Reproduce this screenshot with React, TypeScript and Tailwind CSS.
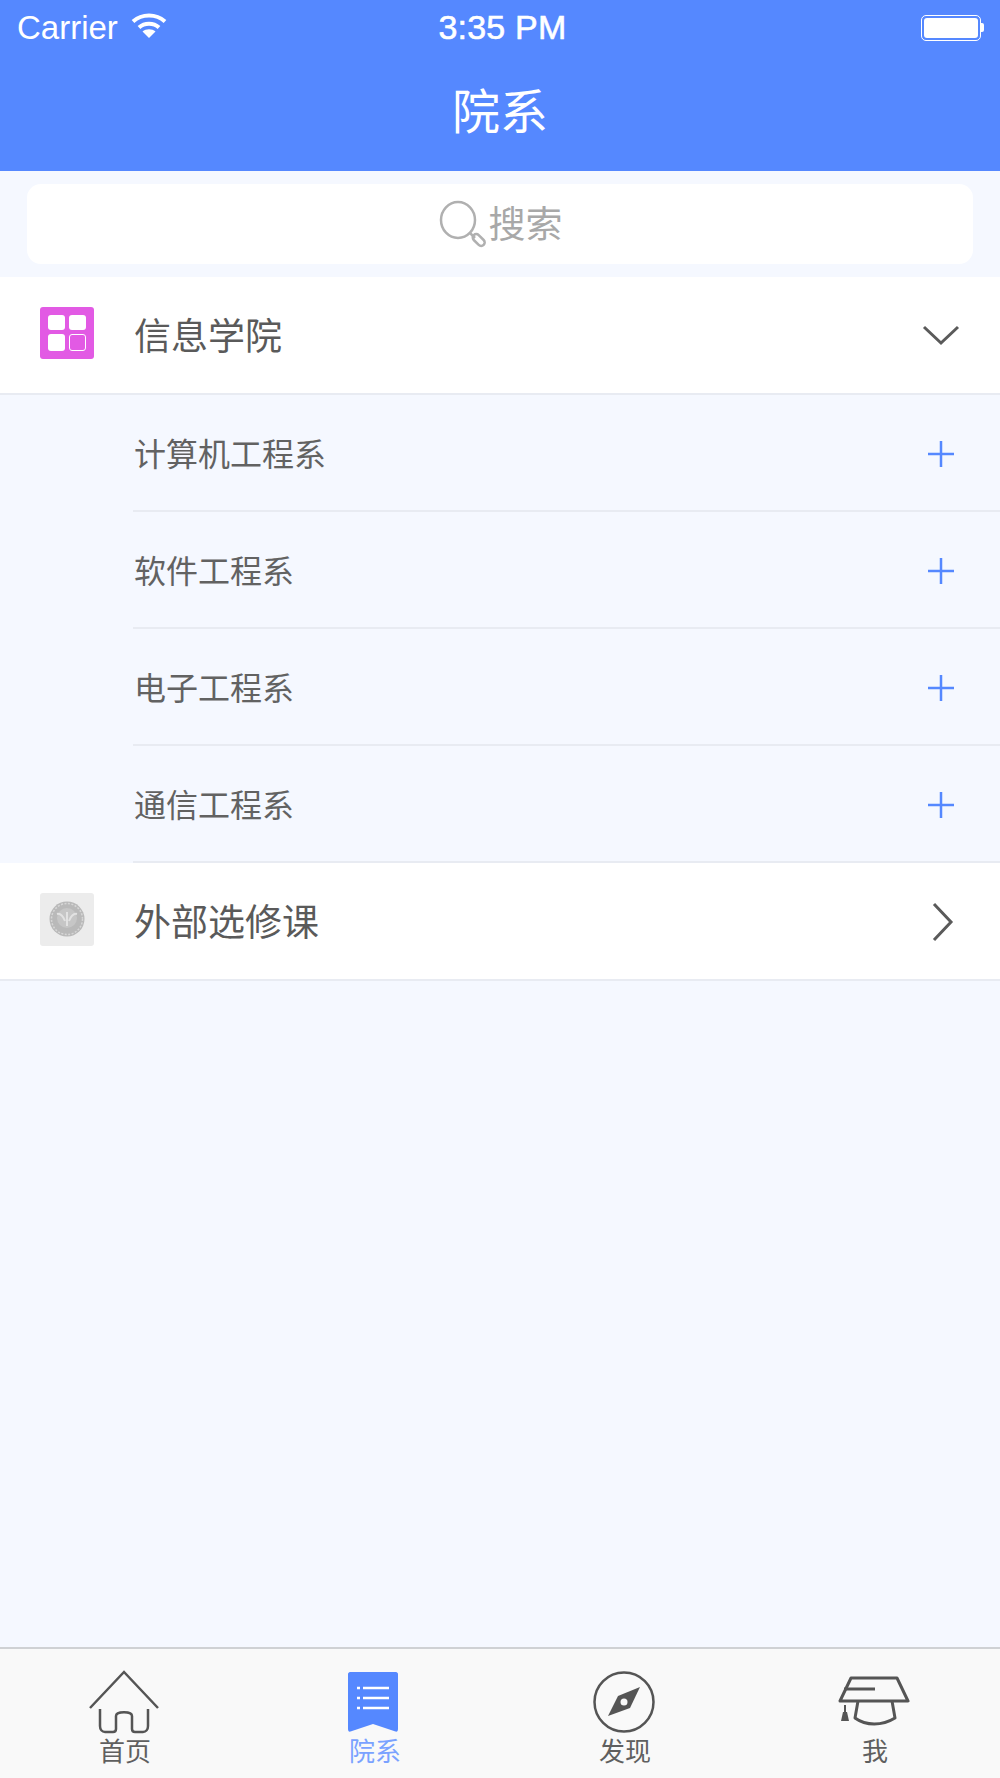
import React from 'react';

const departments = ['计算机工程系', '软件工程系', '电子工程系', '通信工程系'];

function StatusBar() {
  return (
    <div className="h-[54px] flex items-center justify-between pl-[17px] pr-[16px] pt-[1px] text-white text-[33px] font-['Liberation_Sans',sans-serif] relative">
      <div className="flex items-center gap-[13px]">
        <span>Carrier</span>
        <svg width="36" height="26" viewBox="0 0 36 26" fill="none" className="mb-[3px]">
          <path d="M2 8.5C11 0.5 25 0.5 34 8.5" stroke="white" strokeWidth="4" />
          <path d="M8 14.5C13.5 9.5 22.5 9.5 28 14.5" stroke="white" strokeWidth="4" />
          <path d="M18 25L11.5 18.5C15 15.5 21 15.5 24.5 18.5Z" fill="white" />
        </svg>
      </div>
      <span className="absolute left-[5px] right-0 text-center text-[34px] tracking-[0.2px] [-webkit-text-stroke:0.6px_white]">3:35 PM</span>
      <div className="flex items-center">
        <div className="w-[60px] h-[26px] rounded-[5px] border border-white p-[2px]">
          <div className="w-full h-full bg-white rounded-[3px]" />
        </div>
        <div className="w-[3px] h-[9px] bg-white rounded-r-[2px]" />
      </div>
    </div>
  );
}

function SearchBar() {
  return (
    <div className="pt-[13px] pb-[13px] px-[27px]">
      <div className="h-[80px] bg-white rounded-[14px] flex items-center justify-center gap-[3px]">
        <svg width="48" height="48" viewBox="0 0 48 48" fill="none" className="mb-[1px]">
          <ellipse cx="20" cy="20" rx="17" ry="18" stroke="#b0b0b0" strokeWidth="2.5" />
          <path d="M32 33L37 38" stroke="#b0b0b0" strokeWidth="2.5" />
          <rect x="-3" y="-6.5" width="7" height="14" rx="3.5" transform="translate(40 40) rotate(-45)" stroke="#b0b0b0" strokeWidth="2.5" />
        </svg>
        <span className="text-[37px] leading-none text-[#a8a8a8] mb-[4px]">搜索</span>
      </div>
    </div>
  );
}

function GridIcon() {
  return (
    <div className="w-[54px] h-[52px] mb-[5px] rounded-[3px] bg-[#e25ae4] grid grid-cols-2 gap-[4px] p-[8px]">
      <div className="bg-white rounded-[3px]" />
      <div className="bg-white rounded-[3px]" />
      <div className="bg-white rounded-[3px]" />
      <div className="border-[1.5px] border-white rounded-[3px]" />
    </div>
  );
}

function CoinIcon() {
  return (
    <div className="w-[54px] h-[53px] mb-[4px] rounded-[3px] bg-[#ececec] flex items-center justify-center">
      <svg width="36" height="36" viewBox="0 0 36 36">
        <circle cx="18" cy="18" r="17.5" fill="#b9b9b9" />
        <circle cx="18" cy="18" r="15.5" fill="none" stroke="#d6d6d6" strokeWidth="1.5" strokeDasharray="2 1.5" />
        <circle cx="18" cy="17" r="10" fill="#c6c6c6" />
        <path d="M8 13C12 12 14 15 16 20M28 13C24 12 22 15 20 20M18 11V25" stroke="#e2e2e2" strokeWidth="2" fill="none" />
      </svg>
    </div>
  );
}

function TopRow({ icon, title, chevron }: { icon: React.ReactNode; title: string; chevron: 'down' | 'right' }) {
  return (
    <div className="h-[118px] bg-white border-b-2 border-[#e8ebf2] pl-[40px] pr-[40px] flex items-center">
      {icon}
      <span className="ml-[40px] flex-1 text-[37px] leading-none text-[#5a5a5a] mb-[2px]">{title}</span>
      {chevron === 'down' ? (
        <svg width="38" height="22" viewBox="0 0 38 22" fill="none">
          <path d="M2 3L19 19L36 3" stroke="#5a5a5a" strokeWidth="3" />
        </svg>
      ) : (
        <svg width="23" height="40" viewBox="0 0 23 40" fill="none" className="mr-[6px] mt-[2px]">
          <path d="M3 2L20 20L3 38" stroke="#5a5a5a" strokeWidth="3" />
        </svg>
      )}
    </div>
  );
}

function SubRow({ name }: { name: string }) {
  return (
    <div className="ml-[133px] h-[117px] border-b-2 border-[#e8ebf2] pr-[45px] flex items-center justify-between">
      <span className="ml-[1px] text-[32px] leading-none text-[#626262] mb-[2px]">{name}</span>
      <svg width="28" height="28" viewBox="0 0 28 28" className="mt-[2px]">
        <path d="M14 1V27M1 14H27" stroke="#5588ff" strokeWidth="2.5" fill="none" />
      </svg>
    </div>
  );
}

function HomeIcon() {
  return (
    <svg width="70" height="64" viewBox="0 0 70 64" fill="none">
      <path d="M1 38L35 2L69 38" stroke="#555" strokeWidth="2.5" />
      <path d="M11 39V56C11 59.5 13 62 16 62H24C26 62 27 61 27 59V46C27 41 43 41 43 46V59C43 61 44 62 46 62H54C57 62 59 59.5 59 56V39" stroke="#555" strokeWidth="2.5" />
    </svg>
  );
}

function BookmarkIcon() {
  return (
    <svg width="50" height="60" viewBox="0 0 50 60" fill="none" className="mr-[2px]">
      <path d="M2 0H48C49 0 50 1 50 2V57C50 59 49 60 47.5 59.5L25 52L2.5 59.5C1 60 0 59 0 57V2C0 1 1 0 2 0Z" fill="#5588ff" />
      <path d="M15 16H41M15 26H41M15 36H41" stroke="white" strokeWidth="2.5" />
      <path d="M9 16H12M9 26H12M9 36H12" stroke="white" strokeWidth="2.5" />
    </svg>
  );
}

function CompassIcon() {
  return (
    <svg width="62" height="62" viewBox="0 0 62 62" fill="none">
      <circle cx="31" cy="31" r="29.5" stroke="#555" strokeWidth="2.5" />
      <path d="M47 16L37 37L15 45L25 25Z" fill="#555" />
      <circle cx="31" cy="31" r="3.5" fill="#f9f9f9" />
    </svg>
  );
}

function CapIcon() {
  return (
    <svg width="72" height="52" viewBox="0 0 72 52" fill="none">
      <path d="M13 2H59L70 25H2Z" stroke="#555" strokeWidth="3" strokeLinejoin="round" />
      <path d="M6 13H37" stroke="#555" strokeWidth="3" />
      <path d="M20 25L17 42C28 50 44 50 57 42L54 25" stroke="#555" strokeWidth="3" strokeLinejoin="round" />
      <path d="M7 29V36" stroke="#555" strokeWidth="2" />
      <path d="M5 36H9L11 45H3Z" fill="#555" />
    </svg>
  );
}

const tabs = [
  { label: '首页', icon: <HomeIcon />, active: false },
  { label: '院系', icon: <BookmarkIcon />, active: true },
  { label: '发现', icon: <CompassIcon />, active: false },
  { label: '我', icon: <CapIcon />, active: false },
];

function TabBar() {
  return (
    <div className="h-[131px] bg-[#f9f9f9] border-t-2 border-[#cfd1d4] grid grid-cols-4">
      {tabs.map(tab => (
        <div key={tab.label} className="flex flex-col items-center">
          <div className="h-[68px] mt-[19px] mr-[2px] flex items-center justify-center">{tab.icon}</div>
          <span className={`text-[26px] leading-none mt-[1px] ${tab.active ? 'text-[#7aa2ff]' : 'text-[#5f5f5f]'}`}>{tab.label}</span>
        </div>
      ))}
    </div>
  );
}

export default function App() {
  return (
    <div className="w-[1000px] h-[1778px] flex flex-col bg-[#f5f8ff] font-['Noto_Sans_CJK_SC',sans-serif] overflow-hidden">
      <div className="h-[171px] bg-[#5588ff]">
        <StatusBar />
        <div className="h-[117px] flex items-center justify-center text-white text-[48px] leading-none pb-[10px]">院系</div>
      </div>
      <SearchBar />
      <TopRow icon={<GridIcon />} title="信息学院" chevron="down" />
      {departments.map(name => (
        <SubRow key={name} name={name} />
      ))}
      <TopRow icon={<CoinIcon />} title="外部选修课" chevron="right" />
      <div className="flex-1" />
      <TabBar />
    </div>
  );
}
